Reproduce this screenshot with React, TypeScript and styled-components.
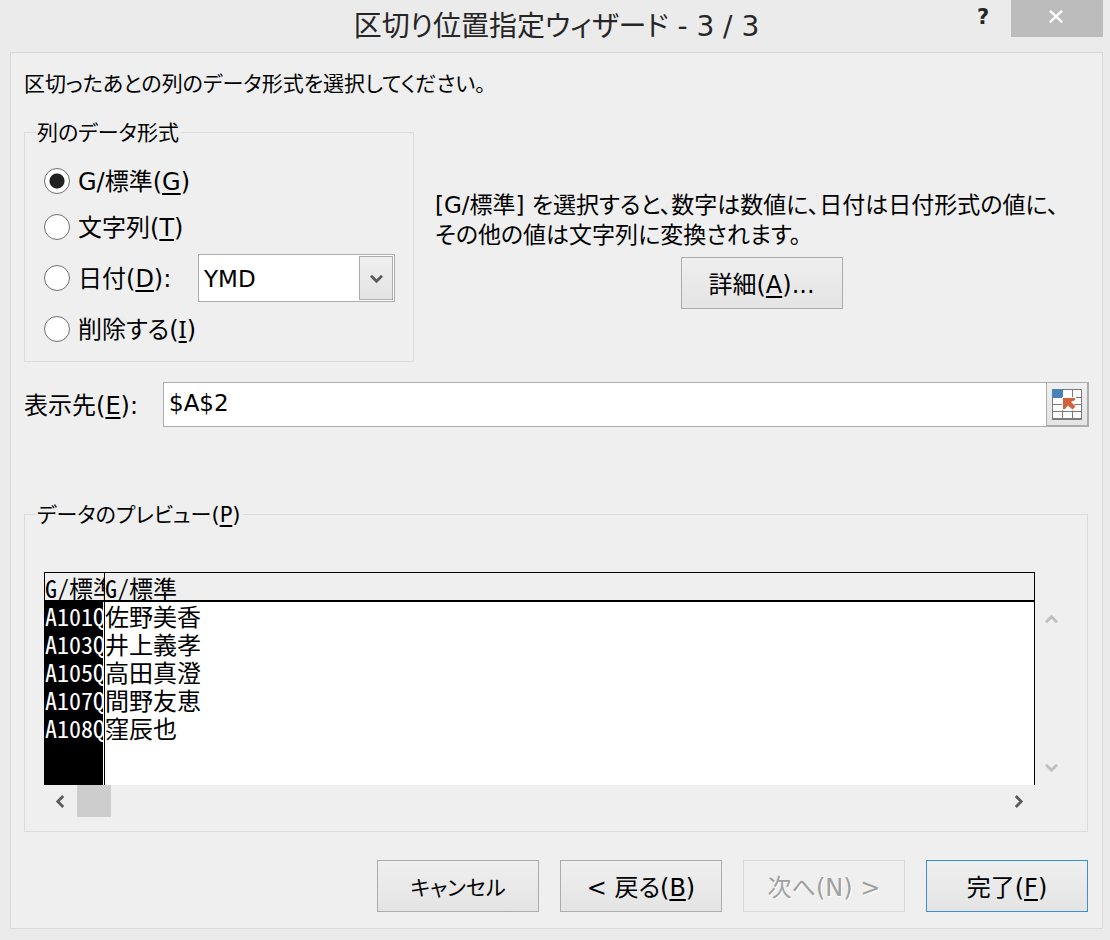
import React, { useState } from "react";
import styled, { createGlobalStyle, css } from "styled-components";

const GlobalStyle = createGlobalStyle`
  *, *::before, *::after { box-sizing: border-box; }
  body {
    margin: 0;
    background: #ebebeb;
    color: #000;
    font-family: "DejaVu Sans", "Noto Sans CJK JP", sans-serif;
    font-size: 23px;
    line-height: 30px;
    font-feature-settings: "palt";
  }
  button, input, select { font: inherit; color: inherit; font-feature-settings: inherit; }
`;

const Dialog = styled.main`
  padding: 0 7px 11px 10px;
`;

const TitleBar = styled.header`
  display: grid;
  grid-template-columns: 1fr auto 1fr;
  height: 52px;
`;

const Title = styled.h1`
  grid-column: 2;
  margin: 0;
  font-size: 28px;
  font-weight: 400;
  line-height: 54px;
  color: #262626;
  white-space: nowrap;
`;

const WindowControls = styled.div`
  display: flex;
  justify-content: flex-end;
  align-items: flex-start;
`;

const HelpButton = styled.button`
  width: 56px;
  height: 34px;
  padding: 0;
  border: 0;
  background: none;
  color: #262626;
  font-weight: 700;
  font-size: 21px;
  line-height: 34px;
`;

const CloseButton = styled.button`
  display: flex;
  align-items: center;
  justify-content: center;
  width: 92px;
  height: 37px;
  padding: 0 2px 4px 0;
  border: 0;
  background: #bcbcbc;
`;

const Panel = styled.form`
  padding: 16px 14px 16px 13px;
  border: 1px solid #d9d9d9;
  background: #efefef;
`;

const Intro = styled.p`
  margin: 0 0 18px;
  font-size: 21px;
`;

const Settings = styled.div`
  display: flex;
  gap: 21px;
`;

const Group = styled.fieldset`
  min-width: 0;
  margin: 0;
  padding: 11px 19px 9px;
  border: 1px solid #dcdcdc;
`;

const FormatGroup = styled(Group)`
  flex: 0 0 390px;
  padding-right: 18px;
`;

const Legend = styled.legend`
  margin-left: -8px;
  padding: 2px 2px 0 1px;
  font-size: 21px;
  line-height: 28px;
`;

const OptionRow = styled.div<{ $tall?: boolean }>`
  display: flex;
  align-items: center;
  gap: 8px;
  height: ${(p) => (p.$tall ? 56 : 46)}px;
  font-size: 24px;
`;

const OptionLabel = styled.label`
  padding-top: 2px;
`;

const Radio = styled.input`
  appearance: none;
  flex: none;
  width: 26px;
  height: 26px;
  margin: 0;
  border: 1px solid #707070;
  border-radius: 50%;
  background: #fff;
  &:checked {
    background: radial-gradient(circle, #212121 0 7px, #fff 8px);
  }
`;

const Key = styled.span<{ $slab?: boolean }>`
  ${(p) => p.$slab && 'font-family: "Noto Sans", sans-serif; line-height: 1;'}
  text-decoration: underline;
  text-decoration-thickness: 2px;
  text-underline-offset: 3px;
  text-decoration-skip-ink: none;
`;

const SelectBox = styled.div`
  display: grid;
  grid-template-columns: 1fr 34px;
  width: 197px;
  height: 48px;
  margin-left: auto;
  padding: 1px;
  border: 1px solid #acacac;
  background: #fff;
  font-size: 23px;
`;

const Select = styled.select`
  grid-area: 1 / 1 / 2 / 3;
  appearance: none;
  min-width: 0;
  padding: 2px 40px 0 4px;
  border: 0;
  background: none;
`;

const face = css`
  border: 1px solid #acacac;
  background: linear-gradient(#efefef, #e4e4e4);
`;

const SelectArrow = styled.span`
  ${face}
  grid-area: 1 / 2 / 2 / 3;
  display: flex;
  align-items: center;
  justify-content: center;
  color: #5c5c5c;
  pointer-events: none;
`;

const Explanation = styled.div`
  flex: 1;
  min-width: 0;
  padding-top: 73px;
`;

const ExplanationText = styled.p`
  margin: 0 0 7px;
`;

const Button = styled.button<{ $primary?: boolean; $compact?: boolean }>`
  ${face}
  display: block;
  width: 162px;
  height: 52px;
  padding: 3px 0 0;
  font-size: ${(p) => (p.$compact ? 21 : 24)}px;
  ${(p) => p.$primary && "border-color: #3c8fd0;"}
  &:disabled {
    border-color: #d9d9d9;
    background: #efefef;
    color: #a0a0a0;
    text-shadow: 1px 1px #fff;
  }
`;

const DetailButton = styled(Button)`
  margin: 0 auto;
`;

const DestinationRow = styled.div`
  display: flex;
  align-items: center;
  margin: 20px -1px 72px 0;
`;

const DestinationLabel = styled.label`
  flex: 0 0 139px;
  padding-top: 2px;
  font-size: 24px;
`;

const RangeBox = styled.div`
  display: flex;
  flex: 1;
  height: 45px;
  border: 1px solid #acacac;
  background: #fff;
`;

const RangeInput = styled.input`
  flex: 1;
  min-width: 0;
  padding: 0 5px 4px;
  border: 0;
  background: none;
  outline: 0;
`;

const RangeButton = styled.button`
  ${face}
  display: flex;
  align-items: center;
  justify-content: center;
  width: 42px;
  padding: 0;
  border-width: 0 1px 1px;
`;

const PreviewGroup = styled(Group)`
  padding: 43px 19px 14px;
`;

const PreviewArea = styled.div`
  display: grid;
  grid-template-columns: 1fr 33px;
`;

const TableFrame = styled.div`
  height: 213px;
  border: solid #000;
  border-width: 1px 1px 0;
  background: #fff;
  overflow: hidden;
`;

const PreviewTable = styled.table`
  width: 100%;
  height: 100%;
  table-layout: fixed;
  border-collapse: separate;
  border-spacing: 0;
  font-family: "Noto Sans Mono CJK JP", "Noto Sans CJK JP", monospace;
  font-size: 24px;
  line-height: 28px;
  font-feature-settings: normal;
`;

const KeyColumn = styled.col`
  width: 60px;
`;

const cell = css`
  height: 28px;
  padding: 0;
  overflow: hidden;
  white-space: nowrap;
  text-align: left;
  vertical-align: top;
  font-weight: 400;
`;

const HeadCell = styled.th`
  ${cell}
  height: 29px;
  border-bottom: 2px solid #000;
  background: #efefef;
  &:first-child { border-right: 1px solid #000; }
`;

const HeadText = styled.div`
  height: 27px;
  line-height: 30px;
  overflow: hidden;
`;

const Cell = styled.td<{ $filler?: boolean }>`
  ${cell}
  ${(p) => p.$filler && "height: auto;"}
  &:first-child {
    border-right: 1px solid #000;
    background: #000;
    color: #fff;
    box-shadow: inset -1px 0 #fff;
  }
`;

const VerticalScroll = styled.div`
  display: flex;
  flex-direction: column;
  justify-content: space-between;
  padding: 31px 0 2px;
`;

const HorizontalScroll = styled.div`
  display: flex;
  height: 32px;
`;

const ScrollButton = styled.button`
  display: flex;
  align-items: center;
  justify-content: center;
  width: 33px;
  height: 32px;
  padding: 0;
  border: 0;
  background: none;
  color: #5c5c5c;
  &:disabled { color: #bfbfbf; }
`;

const ScrollTrack = styled.div`
  flex: 1;
`;

const ScrollThumb = styled.div`
  width: 34px;
  height: 32px;
  background: #cdcdcd;
`;

const Footer = styled.footer`
  display: flex;
  justify-content: flex-end;
  gap: 21px;
  margin-top: 28px;
`;

const angles = { up: 0, right: 90, down: 180, left: 270 };

function Chevron({ to }: { to: keyof typeof angles }) {
  return (
    <svg width="13" height="13" viewBox="0 0 13 13" aria-hidden="true">
      <path
        d="M1 9.2 L6.5 3.8 L12 9.2"
        transform={`rotate(${angles[to]} 6.5 6.5)`}
        fill="none"
        stroke="currentColor"
        strokeWidth="2.8"
      />
    </svg>
  );
}

function CloseIcon() {
  return (
    <svg width="14" height="13" viewBox="0 0 14 13" aria-hidden="true">
      <path d="M1 .8 L13 12.2 M13 .8 L1 12.2" stroke="#fff" strokeWidth="2.4" />
    </svg>
  );
}

function RangeIcon() {
  return (
    <svg width="30" height="31" viewBox="0 0 30 31" aria-hidden="true">
      <path d="M0 0H30V31H0Z" fill="#fff" />
      <path
        d="M11 .5H29.5V30M.5 9V30M0 15.5H30M0 22.5H30M11 8.5H30M10.5 20V30M20.5 0V30"
        fill="none"
        stroke="#7b7b7b"
      />
      <path d="M0 30H30" stroke="#7b7b7b" strokeWidth="2" />
      <path d="M0 0H11V9H0Z" fill="#4a81b8" />
      <path d="M10 8H24V12L21 14L25 19L21 22L16 18L13 21H10Z" fill="#fff" />
      <path d="M11 9H23V11L19 13L23.5 17.5L20.5 20.5L16 16.5L13 20H11Z" fill="#d2603f" />
    </svg>
  );
}

const rows = [
  ["A101Q", "佐野美香"],
  ["A103Q", "井上義孝"],
  ["A105Q", "高田真澄"],
  ["A107Q", "間野友恵"],
  ["A108Q", "窪辰也"],
];

const formats = [
  { id: "general", text: "G/標準", keyName: "G", tail: ")" },
  { id: "text", text: "文字列", keyName: "T", tail: ")" },
  { id: "date", text: "日付", keyName: "D", tail: "):" },
  { id: "skip", text: "削除する", keyName: "I", tail: ")" },
];

export default function App() {
  const [format, setFormat] = useState("general");
  const [destination, setDestination] = useState("$A$2");

  return (
    <>
      <GlobalStyle />
      <Dialog>
        <TitleBar>
          <Title>区切り位置指定ウィザード - 3 / 3</Title>
          <WindowControls>
            <HelpButton type="button" aria-label="ヘルプ">?</HelpButton>
            <CloseButton type="button" aria-label="閉じる">
              <CloseIcon />
            </CloseButton>
          </WindowControls>
        </TitleBar>
        <Panel onSubmit={(e) => e.preventDefault()}>
          <Intro>区切ったあとの列のデータ形式を選択してください。</Intro>
          <Settings>
            <FormatGroup>
              <Legend>列のデータ形式</Legend>
              {formats.map((f) => (
                <OptionRow key={f.id} $tall={f.id === "date"}>
                  <Radio
                    type="radio"
                    name="format"
                    id={f.id}
                    checked={format === f.id}
                    onChange={() => setFormat(f.id)}
                  />
                  <OptionLabel htmlFor={f.id}>
                    {f.text}(<Key $slab={f.keyName === "I"}>{f.keyName}</Key>{f.tail}
                  </OptionLabel>
                  {f.id === "date" && (
                    <SelectBox>
                      <Select aria-label="日付の形式" defaultValue="YMD">
                        <option>YMD</option>
                        <option>MDY</option>
                        <option>DMY</option>
                      </Select>
                      <SelectArrow>
                        <Chevron to="down" />
                      </SelectArrow>
                    </SelectBox>
                  )}
                </OptionRow>
              ))}
            </FormatGroup>
            <Explanation>
              <ExplanationText>
                [G/標準] を選択すると、数字は数値に、日付は日付形式の値に、
                <br />
                その他の値は文字列に変換されます。
              </ExplanationText>
              <DetailButton type="button">詳細(<Key>A</Key>)...</DetailButton>
            </Explanation>
          </Settings>
          <DestinationRow>
            <DestinationLabel htmlFor="destination">表示先(<Key>E</Key>):</DestinationLabel>
            <RangeBox>
              <RangeInput
                id="destination"
                type="text"
                value={destination}
                onChange={(e) => setDestination(e.target.value)}
              />
              <RangeButton type="button" aria-label="範囲を選択">
                <RangeIcon />
              </RangeButton>
            </RangeBox>
          </DestinationRow>
          <PreviewGroup>
            <Legend>データのプレビュー(<Key>P</Key>)</Legend>
            <PreviewArea>
              <TableFrame>
                <PreviewTable>
                  <colgroup>
                    <KeyColumn />
                    <col />
                  </colgroup>
                  <thead>
                    <tr>
                      <HeadCell><HeadText>G/標準</HeadText></HeadCell>
                      <HeadCell><HeadText>G/標準</HeadText></HeadCell>
                    </tr>
                  </thead>
                  <tbody>
                    {rows.map(([code, name]) => (
                      <tr key={code}>
                        <Cell>{code}</Cell>
                        <Cell>{name}</Cell>
                      </tr>
                    ))}
                    <tr>
                      <Cell $filler />
                      <Cell $filler />
                    </tr>
                  </tbody>
                </PreviewTable>
              </TableFrame>
              <VerticalScroll>
                <ScrollButton type="button" disabled aria-label="上へ"><Chevron to="up" /></ScrollButton>
                <ScrollButton type="button" disabled aria-label="下へ"><Chevron to="down" /></ScrollButton>
              </VerticalScroll>
              <HorizontalScroll>
                <ScrollButton type="button" aria-label="左へ"><Chevron to="left" /></ScrollButton>
                <ScrollTrack>
                  <ScrollThumb />
                </ScrollTrack>
                <ScrollButton type="button" aria-label="右へ"><Chevron to="right" /></ScrollButton>
              </HorizontalScroll>
            </PreviewArea>
          </PreviewGroup>
          <Footer>
            <Button type="button" $compact>キャンセル</Button>
            <Button type="button">&lt; 戻る(<Key>B</Key>)</Button>
            <Button type="button" disabled>次へ(N) &gt;</Button>
            <Button type="submit" $primary>完了(<Key>F</Key>)</Button>
          </Footer>
        </Panel>
      </Dialog>
    </>
  );
}
